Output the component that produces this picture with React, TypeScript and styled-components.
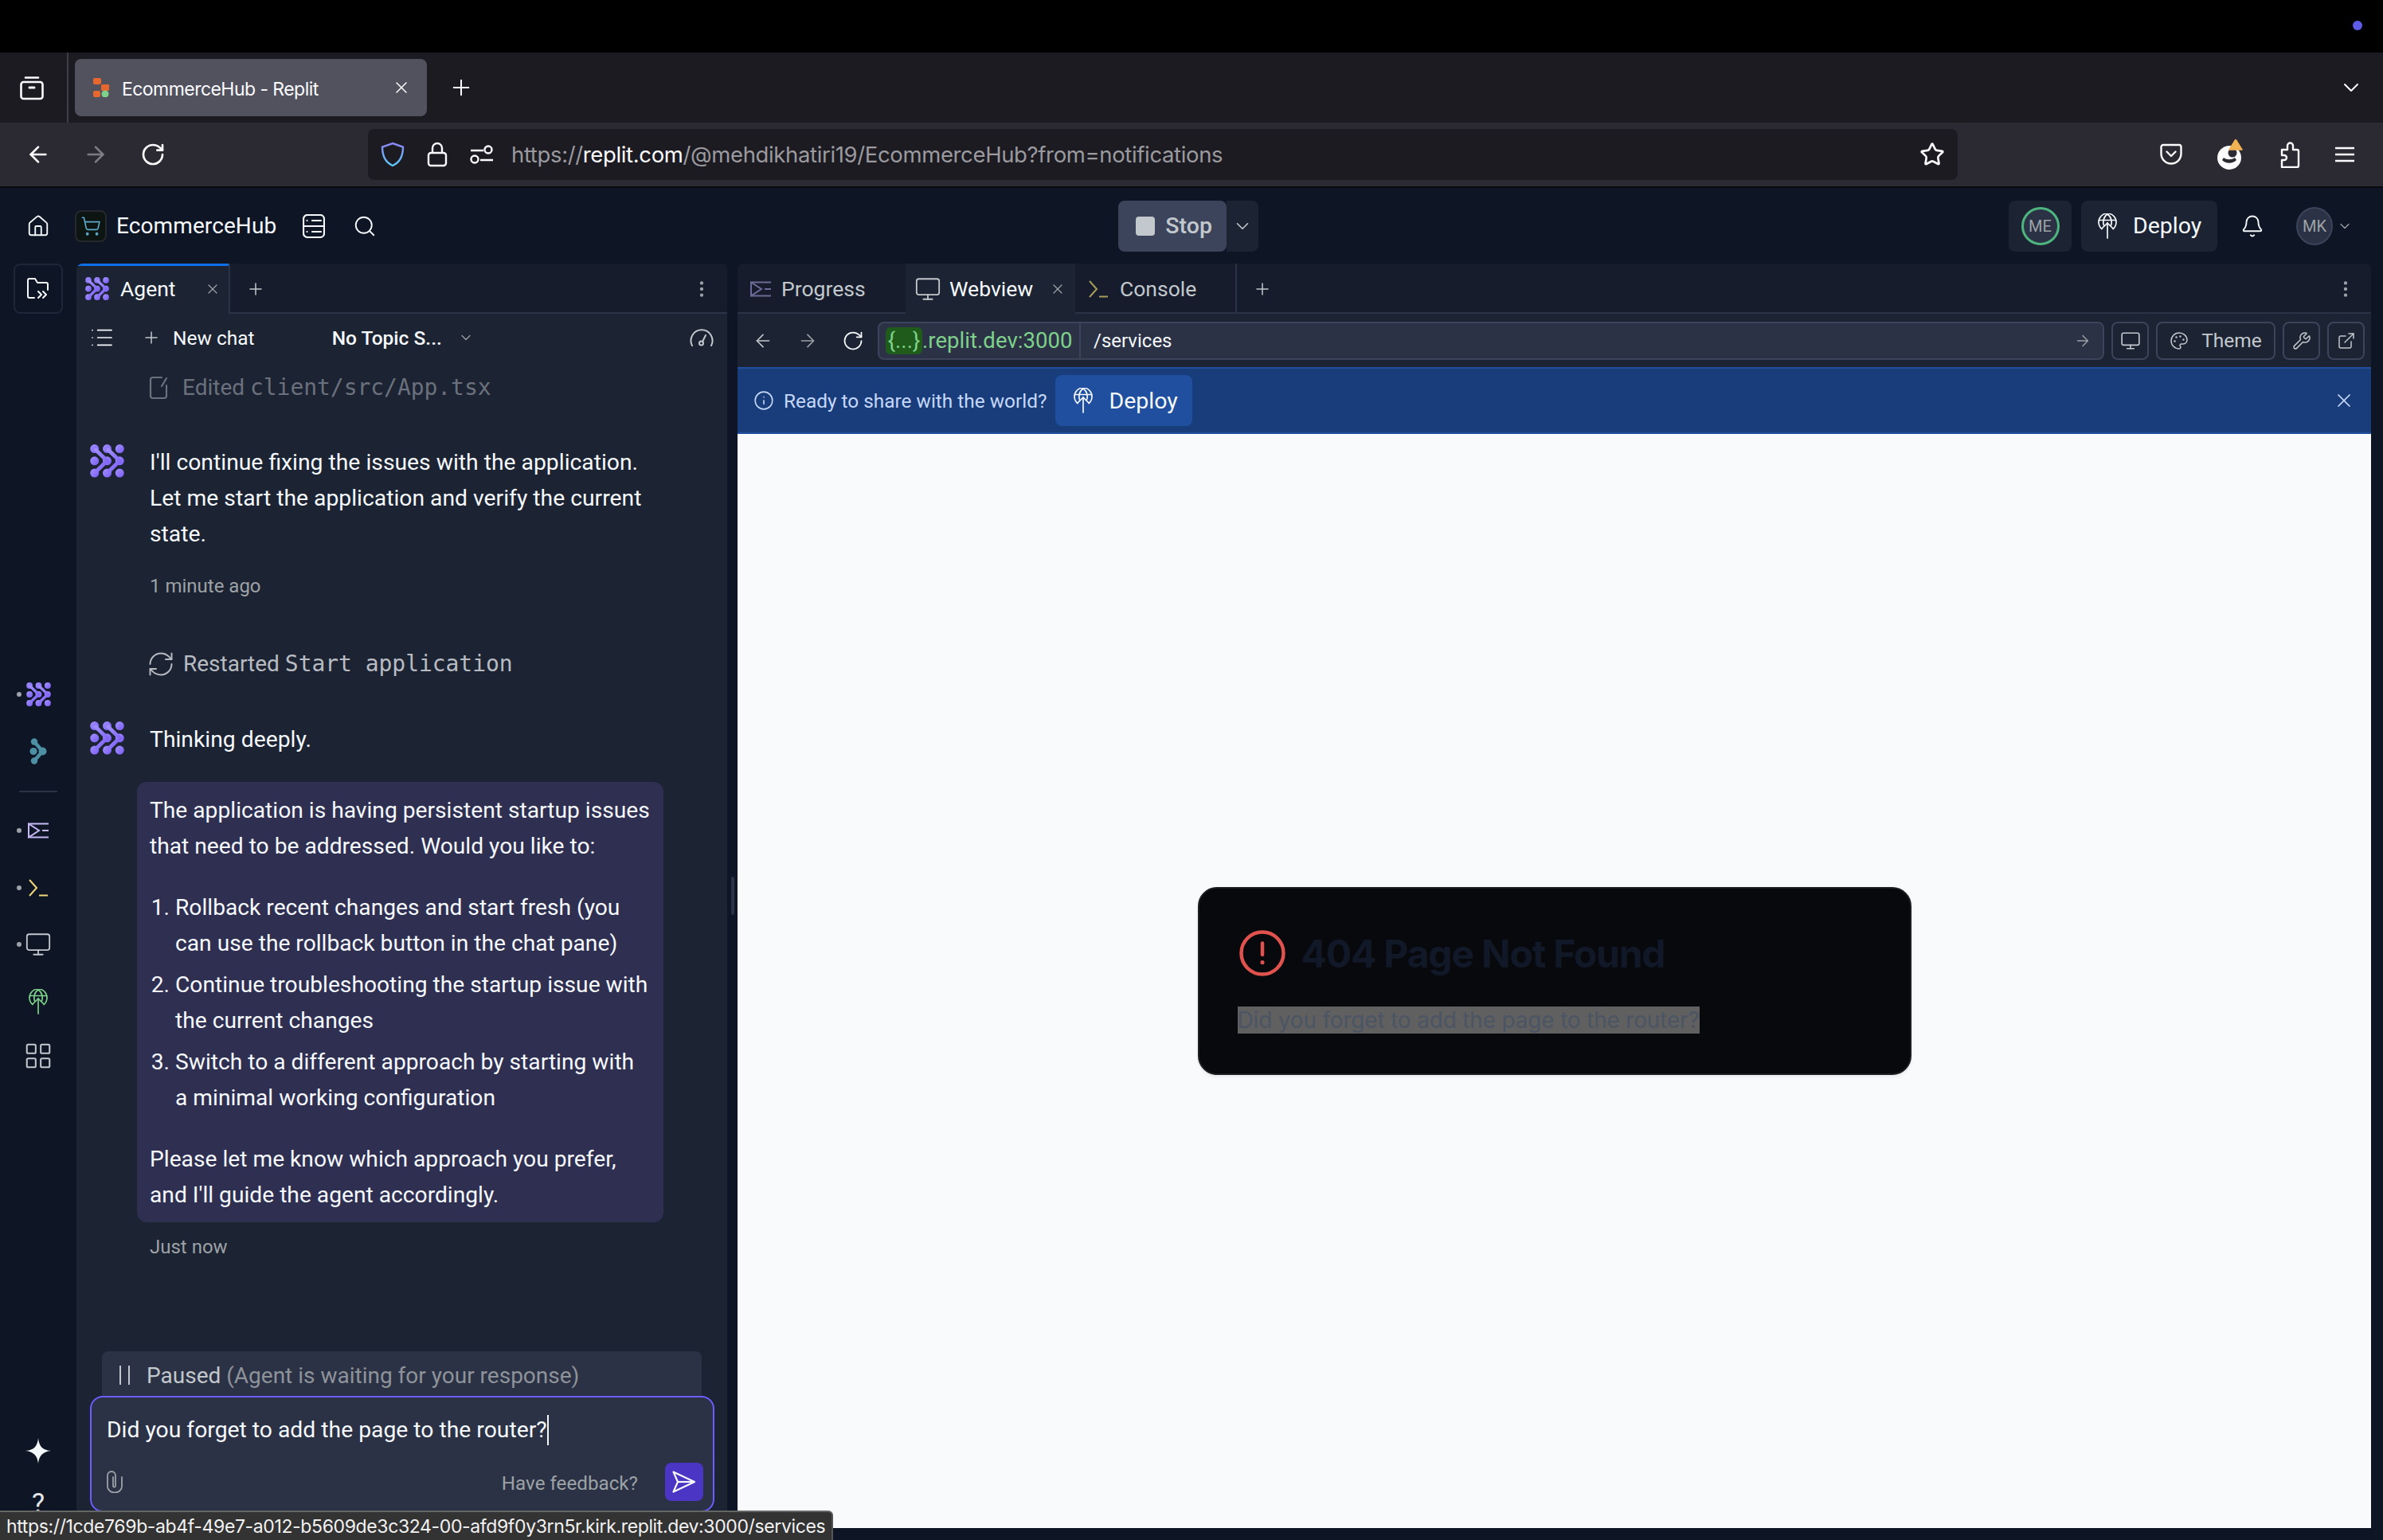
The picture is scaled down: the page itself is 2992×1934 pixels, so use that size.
import React from "react";
import styled, { createGlobalStyle } from "styled-components";
import {
  ArrowLeft, ArrowRight, RotateCw, X, Plus, Star, ChevronDown, Home, Search, Bell, Monitor,
  ExternalLink, Wrench, Palette, EllipsisVertical, Info, ShoppingCart, RefreshCw, LayoutGrid, List,
} from "lucide-react";

const Global = createGlobalStyle`
  html, body { margin: 0; padding: 0; background: #0e1525; }
  * { box-sizing: border-box; }
  #root { width: 2992px; height: 1934px; overflow: hidden; }
`;

const UI = `"Inter", "Liberation Sans", sans-serif`;
const PLEX = `"Roboto", "Noto Sans", sans-serif`;
const MONO = `"DejaVu Sans Mono", "Liberation Mono", monospace`;

const Page = styled.div`
  position: relative; width: 2992px; height: 1934px; overflow: hidden; display: flex; flex-direction: column;
  background: #0e1525; font-family: ${PLEX}; color: #f5f9fc;
`;
const SystemBar = styled.div`
  height: 66px; flex: none; background: #000; display: flex; justify-content: flex-end; align-items: center; padding-right: 26px;
  padding-bottom: 2px;
`;
const RecordingDot = styled.span`width: 12px; height: 12px; border-radius: 50%; background: #5e5ce6;`;
const TabStrip = styled.div`height: 88px; flex: none; background: #1c1b22; display: flex; align-items: center; color: #fbfbfe;`;
const ViewsButton = styled.div`
  width: 86px; height: 100%; display: flex; align-items: center; justify-content: center; border-right: 2px solid #3f3e46; padding-right: 4px;
`;
const BrowserTab = styled.div`
  width: 442px; height: 72px; margin-left: 8px; background: #52525e; border-radius: 8px; display: flex; align-items: center;
  padding: 0 20px 0 23px; font: 400 23px ${UI}; letter-spacing: -0.55px;
`;
const TabLabel = styled.span`margin-left: 16px; flex: 1; padding-top: 3px;`;
const NewTabButton = styled.div`margin-left: 27px; display: flex;`;
const Spacer = styled.div`flex: 1;`;
const TabsEnd = styled.div`margin-right: 24px; display: flex;`;

const NavBar = styled.div`
  height: 80px; flex: none; background: #2b2a33; display: flex; align-items: center; padding-left: 32px; color: #fbfbfe;
`;
const NavGroup = styled.div`display: flex; gap: 40px; align-items: center;`;
const UrlBar = styled.div`
  width: 1996px; height: 64px; margin-left: 254px; background: #1c1b22; border-radius: 8px; display: flex; align-items: center; padding: 0 16px;
`;
const UrlIcons = styled.div`display: flex; align-items: center; gap: 28px; margin-right: 22px;`;
const UrlText = styled.div`flex: 1; font: 400 27.5px ${UI}; letter-spacing: -0.36px; color: #9a9a9f;`;
const UrlDomain = styled.span`color: #fbfbfe;`;
const NavActions = styled.div`display: flex; align-items: center; gap: 44px; margin-left: 254px;`;

const AppHeader = styled.div`
  height: 97px; flex: none; border-top: 2px solid #08090c; display: flex; align-items: center; position: relative; padding-left: 33px;
`;
const ProjectIcon = styled.div`
  width: 40px; height: 40px; margin-left: 31px; border-radius: 8px; background: #0c1512; border: 2px solid #26292c; display: flex; align-items: center; justify-content: center;
`;
const ProjectName = styled.span`margin-left: 12px; font-size: 28px; letter-spacing: 0.1px; color: #f5f9fc;`;
const HeaderIcon = styled.div<{ $ml: number }>`margin-left: ${(p) => p.$ml}px; display: flex;`;
const RunGroup = styled.div`margin-left: 931px; display: flex; height: 64px;`;
const StopButton = styled.div`
  width: 136px; background: #3c445c; border-radius: 8px; display: flex; align-items: center; padding-left: 22px; gap: 13px; font-size: 28.5px; font-weight: 500; color: #c2c8cc;
`;
const StopSquare = styled.span`width: 24px; height: 24px; border-radius: 4px; background: #c2c8cc;`;
const RunCaret = styled.div`width: 40px; background: #1c2333; border-radius: 0 8px 8px 0; display: flex; align-items: center; justify-content: center;`;
const HeaderRight = styled.div`margin-left: auto; display: flex; align-items: center; padding-right: 38px;`;
const MeChip = styled.div`width: 79px; height: 64px; background: #1c2333; border-radius: 8px; display: flex; align-items: center; justify-content: center;`;
const MeRing = styled.div`
  width: 48px; height: 48px; border-radius: 50%; border: 3px solid #4eb57f; background: #2b3245; color: #9da2a6; font: 400 20px ${PLEX};
  display: flex; align-items: center; justify-content: center;
`;
const HeaderDeploy = styled.div`
  width: 171px; height: 64px; margin-left: 12px; background: #1c2333; border-radius: 8px; display: flex; align-items: center; padding-left: 21px; gap: 20px; font-size: 28.5px; color: #f5f9fc;
`;
const Avatar = styled.div`
  width: 46px; height: 48px; margin-left: 40px; border-radius: 50%; background: #2b3245; border: 2px solid #3c445c; color: #9da2a6; font: 400 20px ${PLEX};
  display: flex; align-items: center; justify-content: center;
`;

const Workspace = styled.div`flex: 1; display: flex; min-height: 0; padding-bottom: 15px;`;
const Rail = styled.div`width: 96px; flex: none; display: flex; flex-direction: column; align-items: center; position: relative;`;
const RailFolder = styled.div`
  width: 62px; height: 63px; border: 2px solid #1f2637; border-radius: 8px; display: flex; align-items: center; justify-content: center;
`;
const RailItem = styled.div<{ $top: number; $dot?: boolean }>`
  margin-top: ${(p) => p.$top}px; position: relative; display: flex; justify-content: center; width: 48px;
  ${(p) => p.$dot && `&::before { content: ""; position: absolute; left: -3px; top: 50%; margin-top: -3px; width: 6px; height: 6px; border-radius: 50%; background: #9da2a6; }`}
`;
const RailRule = styled.div`width: 48px; height: 2px; margin-top: 33px; background: #2b3245;`;
const RailHelp = styled.div`margin-top: 29px; font: 400 34px ${PLEX}; color: #e6e8ea;`;

const Panel = styled.div<{ $w: number }>`
  width: ${(p) => p.$w}px; flex: none; display: flex; flex-direction: column; border-radius: 8px 8px 0 0; overflow: hidden; background: #1c2333;
`;
const Gutter = styled.div`width: 13px; flex: none; display: flex; align-items: center; justify-content: center;`;
const GutterHandle = styled.span`width: 4px; height: 48px; border-radius: 2px; background: #2b3245;`;
const TabRow = styled.div`
  height: 63px; flex: none; background: #161c2c; display: flex; align-items: stretch; box-shadow: inset 0 -2px 0 #2b3245;
`;
const PaneTab = styled.div<{ $w: number; $active?: boolean; $pad: number; $gap: number; $divider?: boolean }>`
  width: ${(p) => p.$w}px; display: flex; align-items: center; padding-left: ${(p) => p.$pad}px; gap: ${(p) => p.$gap}px; font-size: 26.5px;
  color: ${(p) => (p.$active ? "#f5f9fc" : "#c2c8cc")};
  ${(p) => p.$active && "background: #1c2333;"}
  ${(p) => p.$divider && "border-right: 2px solid #2b3245;"}
`;
const TopAccent = styled(PaneTab)`box-shadow: inset 0 3px 0 #0f6fe8; border-right: 2px solid #2b3245;`;
const TabCloser = styled.span<{ $ml: number }>`margin-left: ${(p) => p.$ml}px; display: flex;`;
const TabAdd = styled.div`padding-left: 20px; padding-right: 22px; display: flex; align-items: center;`;
const TabMenu = styled.div<{ $pr: number }>`margin-left: auto; padding-right: ${(p) => p.$pr}px; display: flex; align-items: center;`;

const ChatBar = styled.div`height: 60px; flex: none; display: flex; align-items: center; font-size: 24.5px; color: #f5f9fc; padding-left: 16px; padding-right: 17px;`;
const NewChat = styled.span`margin-left: 15px;`;
const TopicName = styled.span`margin-left: 97px; font-weight: 500;`;
const ChatBody = styled.div`flex: 1; min-height: 0; display: flex; flex-direction: column; padding-top: 10px;`;
const ActionLine = styled.div<{ $dim?: boolean; $top: number; $pad: number; $gap: number }>`
  margin-top: ${(p) => p.$top}px; height: 45px; padding-left: ${(p) => p.$pad}px; display: flex; align-items: center; gap: ${(p) => p.$gap}px; font-size: 28px;
  color: ${(p) => (p.$dim ? "#6b717c" : "#b8bcc2")};
`;
const ActionText = styled.span`white-space: pre;`;
const Code = styled.code`font: 400 28px ${MONO}; letter-spacing: -0.05px;`;
const Message = styled.div<{ $top: number }>`margin-top: ${(p) => p.$top}px; padding-left: 17px; display: flex; gap: 32px; font-size: 28.3px; line-height: 45px; color: #f5f9fc; white-space: nowrap;`;
const AgentMark = styled.div`width: 43px; flex: none; display: flex;`;
const Stamp = styled.div<{ $top: number }>`margin-top: ${(p) => p.$top}px; padding-left: 92px; font-size: 24px; line-height: 36px; color: #9da2a6;`;
const Bubble = styled.div`
  margin: 31px 0 0 76px; width: 661px; padding: 13px 16px 12px; background: #2f2f52; border-radius: 12px; font-size: 28.2px; line-height: 45px; color: #f5f9fc; white-space: nowrap;
`;
const BubbleText = styled.p`margin: 0;`;
const Steps = styled.ol`margin: 32px 0; padding: 0 0 0 32px;`;
const Step = styled.li`margin-top: 7px; &:first-child { margin-top: 0; }`;
const Composer = styled.div`margin-top: auto; padding: 0 16px 20px 17px; display: flex; flex-direction: column;`;
const PausedBar = styled.div`
  height: 56px; margin: 0 16px 0 15px; background: #2b3245; border-radius: 8px 8px 0 0; display: flex; align-items: center; padding: 4px 0 0 21px; gap: 19px; font-size: 28px; color: #8e939a;
`;
const PausedLabel = styled.span`color: #c2c8cc;`;
const InputBox = styled.div`
  height: 146px; background: #2b3245; border: 2px solid #6d5dfc; border-radius: 16px; display: flex; flex-direction: column; padding: 19px 12px 12px 19px;
`;
const InputText = styled.div`font-size: 28.3px; line-height: 44px; color: #f5f9fc; display: flex; align-items: center;`;
const Caret = styled.span`width: 2px; height: 38px; background: #f5f9fc;`;
const InputFoot = styled.div`margin-top: auto; display: flex; align-items: center;`;
const Feedback = styled.span`margin-left: auto; margin-right: 34px; padding-top: 3px; font-size: 24.2px; color: #9da2a6;`;
const SendButton = styled.div`width: 48px; height: 48px; background: #4a35c4; border-radius: 8px; display: flex; align-items: center; justify-content: center;`;

const WebBar = styled.div`height: 67px; flex: none; display: flex; align-items: center; padding-left: 19px; color: #c2c8cc;`;
const WebNav = styled.div`display: flex; gap: 30px; align-items: center;`;
const Address = styled.div`
  width: 1540px; height: 48px; margin-left: 17px; background: #2b3245; border: 2px solid #3c445c; border-radius: 8px; display: flex; align-items: center;
`;
const HostPart = styled.div`
  width: 253px; height: 100%; border-right: 2px solid #3c445c; padding-left: 8px; display: flex; align-items: center; color: #7ed18a; font-size: 27.5px; letter-spacing: 0.05px;
`;
const HostChip = styled.span`
  height: 34px; width: 46px; flex: none; background: #1f5b1b; border-radius: 6px; display: flex; align-items: center; justify-content: center; color: #7ed18a;
`;
const PathPart = styled.div`flex: 1; padding-left: 16px; font-size: 24px; color: #f5f9fc;`;
const AddressGo = styled.div`padding-right: 14px; display: flex;`;
const WebTool = styled.div<{ $w: number; $ml: number }>`
  width: ${(p) => p.$w}px; height: 48px; margin-left: ${(p) => p.$ml}px; border: 2px solid #3c445c; border-radius: 8px; display: flex; align-items: center; justify-content: center; gap: 16px; font-size: 24.5px; color: #c2c8cc;
`;
const Banner = styled.div`
  height: 84px; flex: none; background: #183d7a; border-top: 2px solid #1f4f9e; border-bottom: 2px solid #1f4f9e; display: flex; align-items: center; padding-left: 20px; padding-right: 20px; color: #c6d8fa; font-size: 24.4px;
`;
const BannerText = styled.span`margin-left: 12px;`;
const BannerDeploy = styled.div`
  width: 172px; height: 64px; margin-left: 11px; background: #1f4f9e; border-radius: 8px; display: flex; align-items: center; padding-left: 23px; gap: 20px; font-size: 28.5px; color: #f5f9fc;
`;
const BannerClose = styled.div`margin-left: auto; display: flex;`;
const Viewport = styled.div`flex: 1; min-height: 0; background: #f9fafb; display: flex; align-items: center; justify-content: center;`;
const ErrorCard = styled.div`
  width: 896px; height: 236px; background: #08090c; border: 2px solid #1d1e22; border-radius: 24px; padding: 48px 48px; box-shadow: 0 2px 4px rgba(0,0,0,.08);
`;
const ErrorHead = styled.div`display: flex; align-items: center; gap: 20px; height: 66px; margin-left: 2px;`;
const ErrorTitle = styled.h1`margin: 0; font: 700 48px ${UI}; color: #111827; letter-spacing: -1.2px;`;
const ErrorBody = styled.p`margin: 34px 0 0; font: 400 28px/34px ${UI}; letter-spacing: -0.18px; color: #4b5563;`;
const Selected = styled.span`background: #606060; display: inline-block;`;
const StatusTip = styled.div`
  position: absolute; left: 0; bottom: 0; width: 1046px; height: 37px; background: #333; border-top: 2px solid #666; border-right: 2px solid #555; border-radius: 0 6px 0 0;
  font: 400 23px/37px ${UI}; letter-spacing: -0.37px; color: #f2f2f2; padding-left: 8px; white-space: nowrap;
`;

const AgentLogo = ({ size = 43, id }: { size?: number; id: string }) => (
  <svg width={size} height={size * 0.97} viewBox="0 0 42 41">
    <defs><linearGradient id={id} x1="0" y1="0" x2="1" y2="1"><stop offset="0" stopColor="#a392ff" /><stop offset="1" stopColor="#7a5cf5" /></linearGradient></defs>
    <g fill={`url(#${id})`}>
      <circle cx="5.5" cy="20.5" r="5.4" /><circle cx="36.5" cy="5.5" r="5.4" /><circle cx="36.5" cy="35.5" r="5.4" />
      <circle cx="5.5" cy="5.5" r="5.4" /><circle cx="21" cy="5.5" r="5.4" /><circle cx="5.5" cy="35.5" r="5.4" /><circle cx="21" cy="35.5" r="5.4" />
      <circle cx="21" cy="20.5" r="5.4" /><circle cx="36.5" cy="20.5" r="5.4" />
    </g>
    <g fill="none" stroke={`url(#${id})`} strokeWidth="4.8" strokeLinejoin="round">
      <path d="M5.5 5.5L21 20.5L5.5 35.5" /><path d="M21 5.5L36.5 20.5L21 35.5" />
    </g>
  </svg>
);
const TealMark = () => (
  <svg width="22" height="33" viewBox="0 0 22 33">
    <g fill="#4d8fa3"><circle cx="5" cy="16.5" r="4.6" /><circle cx="6" cy="4.5" r="4.2" /><circle cx="6" cy="28.5" r="4.2" /><circle cx="16.5" cy="16.5" r="5" /></g>
    <path d="M6 4.5L16.5 16.5L6 28.5" fill="none" stroke="#4d8fa3" strokeWidth="4.5" strokeLinejoin="round" />
  </svg>
);
const DeployGlyph = ({ color = "#f5f9fc", h = 32 }: { color?: string; h?: number }) => (
  <svg width={(h * 24) / 32} height={h} viewBox="0 0 24 32" fill="none" stroke={color} strokeWidth="1.7" strokeLinecap="round" strokeLinejoin="round">
    <path d="M5 19.5A11 11 0 1 1 19 19.5" /><path d="M1.5 8.5h21" /><path d="M12 1C7 4 6 11 7.5 15" /><path d="M12 1c5 3 6 10 4.5 14" />
    <path d="M12 31V12" /><path d="M5.5 18.5L12 12l6.5 6.5" />
  </svg>
);
const ProgressGlyph = ({ color }: { color: string }) => (
  <svg width="28" height="20" viewBox="0 0 28 20" fill="none" stroke={color} strokeWidth="2">
    <path d="M2 1.5L15 10L2 18.5Z" /><path d="M3 1.5H27M19 10H27M3 18.5H27" />
  </svg>
);
const ConsoleGlyph = ({ color }: { color: string }) => (
  <svg width="26" height="22" viewBox="0 0 26 22" fill="none" stroke={color} strokeWidth="2"><path d="M2 1L11 11L2 21" /><path d="M14 20.5H25" /></svg>
);
const DotFolder = () => (
  <svg width="30" height="30" viewBox="0 0 30 30" fill="none" stroke="#f5f9fc" strokeWidth="2" strokeLinecap="round" strokeLinejoin="round">
    <path d="M10 26H4a2 2 0 0 1-2-2V4a2 2 0 0 1 2-2h7l3 5h11a2 2 0 0 1 2 2v7" /><path d="M15 18l4 4-4 4M21 18l4 4-4 4" />
  </svg>
);
const ServerGlyph = () => (
  <svg width="28" height="30" viewBox="0 0 28 30" fill="none" stroke="#f5f9fc" strokeWidth="2.2" strokeLinecap="round">
    <rect x="1" y="1" width="26" height="28" rx="5" /><path d="M1 15h26M5.5 8h.1M12 8h11M5.5 22h.1M12 22h11" />
  </svg>
);
const ContainerGlyph = () => (
  <svg width="32" height="32" viewBox="0 0 32 32" fill="none" stroke="#fbfbfe" strokeWidth="2.6" strokeLinecap="round">
    <path d="M8 3.5h16" /><rect x="2.5" y="9" width="27" height="21" rx="3" /><path d="M13 16h6" strokeWidth="3" />
  </svg>
);
const ReplitFavicon = () => (
  <svg width="20" height="24" viewBox="0 0 20 24">
    <rect x="0" y="0" width="10" height="8" rx="2" fill="#e8672e" /><rect x="10" y="8" width="10" height="8" rx="1" fill="#e8672e" />
    <rect x="0" y="16" width="9" height="8" rx="2" fill="#e8672e" /><ellipse cx="15" cy="20" rx="4.5" ry="4.5" fill="#7ed18a" />
  </svg>
);
const ShieldGlyph = () => (
  <svg width="30" height="32" viewBox="0 0 30 32" fill="none" strokeWidth="2.4">
    <defs><linearGradient id="sh" x1="0" y1="0" x2="0" y2="1"><stop offset="0" stopColor="#8a86f5" /><stop offset="1" stopColor="#5cc8f5" /></linearGradient></defs>
    <path d="M15 2L28 6.5C28 18 24 26 15 30C6 26 2 18 2 6.5Z" stroke="url(#sh)" />
  </svg>
);
const LockGlyph = () => (
  <svg width="26" height="32" viewBox="0 0 26 32" fill="none" stroke="#fbfbfe" strokeWidth="2.4"><rect x="2" y="14" width="22" height="16" rx="3" /><path d="M7 14V8a6 6 0 0 1 12 0v6" /></svg>
);
const PermsGlyph = () => (
  <svg width="30" height="26" viewBox="0 0 30 26" fill="none" stroke="#fbfbfe" strokeWidth="2.4"><path d="M1 8h16M13 20h16" /><circle cx="23" cy="7" r="4.5" /><circle cx="6" cy="19" r="4.5" /></svg>
);
const PocketGlyph = () => (
  <svg width="28" height="28" viewBox="0 0 28 28" fill="none" stroke="#fbfbfe" strokeWidth="2.4" strokeLinecap="round" strokeLinejoin="round"><path d="M4 2h20a2.5 2.5 0 0 1 2.5 2.5V13a12.5 12.5 0 0 1-25 0V4.5A2.5 2.5 0 0 1 4 2Z" /><path d="M8.5 10.5L14 16l5.5-5.5" /></svg>
);
const GlanceGlyph = () => (
  <svg width="34" height="38" viewBox="0 0 34 38">
    <circle cx="15" cy="23" r="15" fill="#fbfbfe" />
    <path d="M6 26c5 5 13 5 18 0l-2-3c-4 3-10 3-14 0Z" fill="#2b2a33" />
    <circle cx="19" cy="17" r="5.5" fill="#2b2a33" />
    <path d="M23 0l8 13H15Z" fill="#f0b252" stroke="#f0b252" strokeLinejoin="round" strokeWidth="1.5" />
  </svg>
);
const PuzzleGlyph = () => (
  <svg width="26" height="34" viewBox="0 0 26 34" fill="none" stroke="#fbfbfe" strokeWidth="2.4" strokeLinejoin="round">
    <path d="M3 11h7V6a3.5 3.5 0 0 1 7 0v5h5a2 2 0 0 1 2 2v18a2 2 0 0 1-2 2H3v-9h3a3 3 0 0 0 0-6H3V11Z" />
  </svg>
);
const MenuGlyph = () => (
  <svg width="24" height="20" viewBox="0 0 24 20" fill="none" stroke="#fbfbfe" strokeWidth="2.4"><path d="M0 2h24M0 10h24M0 18h24" /></svg>
);
const EditGlyph = () => (
  <svg width="26" height="30" viewBox="0 0 26 30" fill="none" stroke="#6b717c" strokeWidth="2.2" strokeLinecap="round"><path d="M16 2H5a3 3 0 0 0-3 3v20a3 3 0 0 0 3 3h14a3 3 0 0 0 3-3V12" /><path d="M22 3L16 13" /></svg>
);
const Spark = () => (
  <svg width="32" height="32" viewBox="0 0 32 32"><path d="M16 0C17 10 21 15 32 16C21 17 17 23 16 32C15 23 11 17 0 16C11 15 15 10 16 0Z" fill="#f5f9fc" /></svg>
);
const PauseGlyph = () => (
  <svg width="16" height="24" viewBox="0 0 16 24" fill="none" stroke="#c2c8cc" strokeWidth="2"><path d="M2 0v24M13 0v24" /></svg>
);
const SendGlyph = () => (
  <svg width="30" height="28" viewBox="0 0 30 28" fill="none" stroke="#f5f9fc" strokeWidth="2.2" strokeLinejoin="round"><path d="M1.5 1.5L28 14L1.5 26.5L7 14Z" /><path d="M7 14H28" /></svg>
);
const AlertGlyph = () => (
  <svg width="58" height="58" viewBox="0 0 58 58" fill="none" stroke="#e0524d" strokeWidth="4.5" strokeLinecap="round">
    <circle cx="29" cy="29" r="26.5" /><path d="M29 16.5V31" /><path d="M29 40.5v.2" strokeWidth="5" />
  </svg>
);
const ClipGlyph = () => (
  <svg width="20" height="28" viewBox="0 0 20 28" fill="none" stroke="#9da2a6" strokeWidth="1.8" strokeLinecap="round">
    <path d="M19 8v12a9 7.5 0 0 1-18 0V6a5 5 0 0 1 10 0v13a1.5 1.5 0 0 1-3 0V8" />
  </svg>
);
const GaugeGlyph = () => (
  <svg width="30" height="26" viewBox="0 0 30 26" fill="none" stroke="#c2c8cc" strokeWidth="2" strokeLinecap="round">
    <path d="M3 23A13.5 13.5 0 1 1 27 23" /><circle cx="14.5" cy="20" r="2.5" /><path d="M16 18L20 10" />
  </svg>
);

const Thin = { strokeWidth: 1.5 };
const Fine = { strokeWidth: 1.3 };

export default function App() {
  return (
    <Page>
      <Global />
      <SystemBar><RecordingDot /></SystemBar>
      <TabStrip>
        <ViewsButton><ContainerGlyph /></ViewsButton>
        <BrowserTab>
          <ReplitFavicon />
          <TabLabel>EcommerceHub - Replit</TabLabel>
          <X size={24} color="#fbfbfe" {...Thin} />
        </BrowserTab>
        <NewTabButton><Plus size={32} color="#fbfbfe" {...Thin} /></NewTabButton>
        <Spacer />
        <TabsEnd><ChevronDown size={32} color="#fbfbfe" {...Thin} /></TabsEnd>
      </TabStrip>
      <NavBar>
        <NavGroup>
          <ArrowLeft size={32} color="#fbfbfe" strokeWidth={2} />
          <ArrowRight size={32} color="#7c7c82" strokeWidth={2} />
          <RotateCw size={32} color="#fbfbfe" strokeWidth={2} />
        </NavGroup>
        <UrlBar>
          <UrlIcons><ShieldGlyph /><LockGlyph /><PermsGlyph /></UrlIcons>
          <UrlText>https://<UrlDomain>replit.com</UrlDomain>/@mehdikhatiri19/EcommerceHub?from=notifications</UrlText>
          <Star size={32} color="#fbfbfe" strokeWidth={2} />
        </UrlBar>
        <NavActions>
          <PocketGlyph /><GlanceGlyph /><PuzzleGlyph /><MenuGlyph />
        </NavActions>
      </NavBar>
      <AppHeader>
        <Home size={30} color="#f5f9fc" {...Thin} />
        <ProjectIcon><ShoppingCart size={26} color="#5fa8c9" {...Thin} /></ProjectIcon>
        <ProjectName>EcommerceHub</ProjectName>
        <HeaderIcon $ml={33}><ServerGlyph /></HeaderIcon>
        <HeaderIcon $ml={35}><Search size={30} color="#f5f9fc" {...Thin} /></HeaderIcon>
        <RunGroup>
          <StopButton><StopSquare />Stop</StopButton>
          <RunCaret><ChevronDown size={26} color="#c2c8cc" {...Thin} /></RunCaret>
        </RunGroup>
        <HeaderRight>
          <MeChip><MeRing>ME</MeRing></MeChip>
          <HeaderDeploy><DeployGlyph />Deploy</HeaderDeploy>
          <HeaderIcon $ml={29}><Bell size={30} color="#f5f9fc" {...Thin} /></HeaderIcon>
          <Avatar>MK</Avatar>
          <HeaderIcon $ml={5}><ChevronDown size={20} color="#9da2a6" {...Thin} /></HeaderIcon>
        </HeaderRight>
      </AppHeader>
      <Workspace>
        <Rail>
          <RailFolder><DotFolder /></RailFolder>
          <RailItem $top={463} $dot><AgentLogo size={31} id="railA" /></RailItem>
          <RailItem $top={40}><TealMark /></RailItem>
          <RailRule />
          <RailItem $top={38} $dot><ProgressGlyph color="#c6b9f5" /></RailItem>
          <RailItem $top={51} $dot><ConsoleGlyph color="#f0d878" /></RailItem>
          <RailItem $top={43} $dot><Monitor size={34} color="#c2c8cc" {...Fine} /></RailItem>
          <RailItem $top={39}><DeployGlyph color="#7ed18a" h={32} /></RailItem>
          <RailItem $top={33}><LayoutGrid size={38} color="#c2c8cc" {...Fine} /></RailItem>
          <RailItem $top={461}><Spark /></RailItem>
          <RailHelp>?</RailHelp>
        </Rail>
        <Panel $w={817}>
          <TabRow>
            <TopAccent $w={193} $active $pad={11} $gap={14}>
              <AgentLogo size={30} id="tabA" />Agent
              <TabCloser $ml={22}><X size={20} color="#9da2a6" {...Thin} /></TabCloser>
            </TopAccent>
            <TabAdd><Plus size={24} color="#c2c8cc" {...Thin} /></TabAdd>
            <TabMenu $pr={19}><EllipsisVertical size={26} color="#9da2a6" strokeWidth={2} /></TabMenu>
          </TabRow>
          <ChatBar>
            <List size={32} color="#f5f9fc" {...Fine} />
            <TabCloser $ml={34}><Plus size={24} color="#c2c8cc" {...Thin} /></TabCloser>
            <NewChat>New chat</NewChat>
            <TopicName>No Topic S...</TopicName>
            <TabCloser $ml={20}><ChevronDown size={20} color="#9da2a6" {...Thin} /></TabCloser>
            <TabMenu $pr={0}><GaugeGlyph /></TabMenu>
          </ChatBar>
          <ChatBody>
            <ActionLine $dim $top={0} $pad={91} $gap={16}><EditGlyph /><ActionText>Edited <Code>client/src/App.tsx</Code></ActionText></ActionLine>
            <Message $top={49}>
              <AgentMark><AgentLogo id="m1" /></AgentMark>
              <div>I'll continue fixing the issues with the application.<br />Let me start the application and verify the current<br />state.</div>
            </Message>
            <Stamp $top={25}>1 minute ago</Stamp>
            <ActionLine $top={57} $pad={88} $gap={10}><RefreshCw size={36} color="#b8bcc2" {...Fine} /><ActionText>Restarted <Code>Start application</Code></ActionText></ActionLine>
            <Message $top={50}>
              <AgentMark><AgentLogo id="m2" /></AgentMark>
              <div>Thinking deeply.</div>
            </Message>
            <Bubble>
              <BubbleText>The application is having persistent startup issues<br />that need to be addressed. Would you like to:</BubbleText>
              <Steps>
                <Step>Rollback recent changes and start fresh (you<br />can use the rollback button in the chat pane)</Step>
                <Step>Continue troubleshooting the startup issue with<br />the current changes</Step>
                <Step>Switch to a different approach by starting with<br />a minimal working configuration</Step>
              </Steps>
              <BubbleText>Please let me know which approach you prefer,<br />and I'll guide the agent accordingly.</BubbleText>
            </Bubble>
            <Stamp $top={13}>Just now</Stamp>
            <Composer>
              <PausedBar><PauseGlyph /><span><PausedLabel>Paused</PausedLabel> (Agent is waiting for your response)</span></PausedBar>
              <InputBox>
                <InputText>Did you forget to add the page to the router?<Caret /></InputText>
                <InputFoot>
                  <ClipGlyph />
                  <Feedback>Have feedback?</Feedback>
                  <SendButton><SendGlyph /></SendButton>
                </InputFoot>
              </InputBox>
            </Composer>
          </ChatBody>
        </Panel>
        <Gutter><GutterHandle /></Gutter>
        <Panel $w={2051}>
          <TabRow>
            <PaneTab $w={211} $pad={15} $gap={12}><ProgressGlyph color="#6c6a96" />Progress</PaneTab>
            <PaneTab $w={213} $active $pad={11} $gap={10}>
              <Monitor size={34} color="#c2c8cc" {...Fine} />Webview
              <TabCloser $ml={11}><X size={20} color="#9da2a6" {...Thin} /></TabCloser>
            </PaneTab>
            <PaneTab $w={203} $pad={16} $gap={14} $divider><ConsoleGlyph color="#a79c5c" />Console</PaneTab>
            <TabAdd><Plus size={24} color="#c2c8cc" {...Thin} /></TabAdd>
            <TabMenu $pr={19}><EllipsisVertical size={26} color="#9da2a6" strokeWidth={2} /></TabMenu>
          </TabRow>
          <WebBar>
            <WebNav>
              <ArrowLeft size={26} color="#c2c8cc" {...Thin} />
              <ArrowRight size={26} color="#9da2a6" {...Thin} />
              <RotateCw size={28} color="#f5f9fc" {...Thin} />
            </WebNav>
            <Address>
              <HostPart><HostChip>{"{...}"}</HostChip>.replit.dev:3000</HostPart>
              <PathPart>/services</PathPart>
              <AddressGo><ArrowRight size={22} color="#9da2a6" {...Thin} /></AddressGo>
            </Address>
            <WebTool $w={47} $ml={9}><Monitor size={26} color="#c2c8cc" {...Thin} /></WebTool>
            <WebTool $w={150} $ml={9}><Palette size={24} color="#c2c8cc" {...Thin} />Theme</WebTool>
            <WebTool $w={47} $ml={9}><Wrench size={24} color="#c2c8cc" {...Thin} /></WebTool>
            <WebTool $w={47} $ml={9}><ExternalLink size={24} color="#c2c8cc" {...Thin} /></WebTool>
          </WebBar>
          <Banner>
            <Info size={26} color="#c6d8fa" {...Thin} />
            <BannerText>Ready to share with the world?</BannerText>
            <BannerDeploy><DeployGlyph />Deploy</BannerDeploy>
            <BannerClose><X size={28} color="#c6d8fa" {...Thin} /></BannerClose>
          </Banner>
          <Viewport>
            <ErrorCard>
              <ErrorHead><AlertGlyph /><ErrorTitle>404 Page Not Found</ErrorTitle></ErrorHead>
              <ErrorBody><Selected>Did you forget to add the page to the router?</Selected></ErrorBody>
            </ErrorCard>
          </Viewport>
        </Panel>
      </Workspace>
      <StatusTip>https://1cde769b-ab4f-49e7-a012-b5609de3c324-00-afd9f0y3rn5r.kirk.replit.dev:3000/services</StatusTip>
    </Page>
  );
}
